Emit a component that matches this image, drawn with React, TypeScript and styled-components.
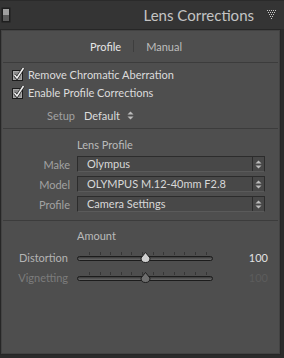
import React from "react";
import { styled, createGlobalStyle } from "styled-components";

const GlobalStyle = createGlobalStyle`
  html, body {
    margin: 0;
    padding: 0;
    background: #2b2b2b;
  }
  * {
    box-sizing: border-box;
  }
`;

type SliderProps = {
  label: string;
  value: number;
  position: number;
  disabled?: boolean;
};

const TICKS = Array.from({ length: 12 }, (_, i) => 12 + i * 10.6);

const SliderRow = ({ label, value, position, disabled }: SliderProps) => {
  return (
    <StyledSliderRow>
      <StyledSliderLabel $disabled={disabled}>{label}</StyledSliderLabel>
      <StyledSliderBody>
        <StyledTicks>
          {TICKS.map((x) => (
            <StyledTick key={x} style={{ left: x }} />
          ))}
        </StyledTicks>
        <StyledTrack />
        <StyledThumb style={{ left: position - 5 }}>
          <svg width="11" height="11" viewBox="0 0 11 11">
            <path
              d="M5.5 0.5 L10 6 Q10 10.5 5.5 10.5 Q1 10.5 1 6 Z"
              fill={disabled ? "#6e6e6e" : "#cfcfcf"}
              stroke="#1e1e1e"
              strokeWidth="1"
            />
          </svg>
        </StyledThumb>
      </StyledSliderBody>
      <StyledSliderValue $disabled={disabled}>{value}</StyledSliderValue>
    </StyledSliderRow>
  );
};

const Checkbox = () => (
  <svg width="14" height="14" viewBox="0 0 14 14">
    <rect x="1.5" y="3.5" width="10" height="10" fill="#8c8c8c" stroke="#1c1c1c" />
    <rect x="2.5" y="4.5" width="8" height="8" fill="none" stroke="#a8a8a8" />
    <path d="M3.5 8 L6 11 L12.5 1" fill="none" stroke="#1c1c1c" strokeWidth="3" />
    <path d="M3.5 8 L6 11 L12.5 1" fill="none" stroke="#f2f2f2" strokeWidth="1.6" />
  </svg>
);

const Spinner = () => (
  <svg width="7" height="9" viewBox="0 0 7 9">
    <path d="M3.5 0.5 L6.5 3.5 L0.5 3.5 Z" fill="currentColor" />
    <path d="M3.5 8.5 L6.5 5.5 L0.5 5.5 Z" fill="currentColor" />
  </svg>
);

const Select = ({ value }: { value: string }) => (
  <StyledSelect>
    <StyledSelectValue>{value}</StyledSelectValue>
    <StyledSelectArrows>
      <Spinner />
    </StyledSelectArrows>
  </StyledSelect>
);

const DOTS = [
  [0, 0], [2, 0], [4, 0], [6, 0], [8, 0],
  [1, 2], [3, 2], [5, 2], [7, 2],
  [2, 4], [4, 4], [6, 4],
  [3, 6], [5, 6],
  [4, 8],
];

const App = () => {
  return (
    <>
      <GlobalStyle />
      <StyledFrame>
        <StyledHeader>
          <svg width="11" height="17" viewBox="0 0 11 17">
            <rect x="0.5" y="0.5" width="9" height="15" fill="#1e1e1e" />
            <rect x="2" y="2" width="6" height="6" fill="#a0a0a0" />
            <rect x="2" y="8" width="6" height="6" fill="#5c5c5c" />
          </svg>
          <StyledTitle>Lens Corrections</StyledTitle>
          <svg width="10" height="10" viewBox="0 0 10 10">
            {DOTS.map(([x, y]) => (
              <rect key={`${x}-${y}`} x={x} y={y} width="1" height="1" fill="#c8c8c8" />
            ))}
          </svg>
        </StyledHeader>

        <StyledPanel>
          <StyledTabs>
            <StyledTab $active>Profile</StyledTab>
            <StyledTabDivider />
            <StyledTab>Manual</StyledTab>
          </StyledTabs>

          <StyledSection $top={2} $bottom={4}>
            <StyledCheckRow>
              <Checkbox />
              <span>Remove Chromatic Aberration</span>
            </StyledCheckRow>
            <StyledCheckRow>
              <Checkbox />
              <span>Enable Profile Corrections</span>
            </StyledCheckRow>
            <StyledSetupRow>
              <StyledFieldLabel $width={72}>Setup</StyledFieldLabel>
              <StyledSetupValue>
                Default
                <Spinner />
              </StyledSetupValue>
            </StyledSetupRow>
          </StyledSection>

          <StyledSection $top={8} $bottom={8}>
            <StyledGroupTitle>Lens Profile</StyledGroupTitle>
            <StyledFieldList>
              <StyledFieldRow>
                <StyledFieldLabel $width={67}>Make</StyledFieldLabel>
                <Select value="Olympus" />
              </StyledFieldRow>
              <StyledFieldRow>
                <StyledFieldLabel $width={67}>Model</StyledFieldLabel>
                <Select value="OLYMPUS M.12-40mm F2.8" />
              </StyledFieldRow>
              <StyledFieldRow>
                <StyledFieldLabel $width={67}>Profile</StyledFieldLabel>
                <Select value="Camera Settings" />
              </StyledFieldRow>
            </StyledFieldList>
          </StyledSection>

          <StyledSection $top={7} $bottom={0}>
            <StyledGroupTitle>Amount</StyledGroupTitle>
            <StyledSliders>
              <SliderRow label="Distortion" value={100} position={68} />
              <SliderRow label="Vignetting" value={100} position={68} disabled />
            </StyledSliders>
          </StyledSection>
        </StyledPanel>
      </StyledFrame>
    </>
  );
};

export default App;

const StyledFrame = styled("div")`
  width: 284px;
  height: 358px;
  display: flex;
  flex-direction: column;
  background: #2b2b2b;
  font-family: Lato, "Open Sans", sans-serif;
  font-size: 11px;
`;

const StyledHeader = styled("div")`
  height: 29px;
  display: flex;
  align-items: center;
  padding: 0 7px 0 1px;
  background: #343434;
  border-top: 1px solid #2a2a2a;
`;

const StyledTitle = styled("div")`
  flex: 1;
  text-align: right;
  padding-right: 13px;
  font-size: 15px;
  color: #c4c4c4;
`;

const StyledPanel = styled("div")`
  flex: 1;
  margin: 0 3px 3px 0;
  display: flex;
  flex-direction: column;
  background: #4e4e4e;
  border: 1px solid #262626;
  box-shadow: inset 0 0 0 1px #434343;
`;

const StyledTabs = styled("div")`
  height: 32px;
  display: flex;
  align-items: center;
  justify-content: center;
  gap: 12px;
  padding-right: 9px;
`;

const StyledTab = styled("span")<{ $active?: boolean }>`
  color: ${(p) => (p.$active ? "#e6e6e6" : "#bdbdbd")};
`;

const StyledTabDivider = styled("span")`
  width: 1px;
  height: 12px;
  background: #3e3e3e;
`;

const StyledSection = styled("div")<{ $top: number; $bottom: number }>`
  margin: 0 2px;
  padding: ${(p) => p.$top}px 0 ${(p) => p.$bottom}px;
  border-top: 1px solid #3c3c3c;
`;

const StyledCheckRow = styled("div")`
  height: 18px;
  display: flex;
  align-items: center;
  gap: 3px;
  padding-left: 8px;
  color: #dcdcdc;
`;

const StyledSetupRow = styled("div")`
  height: 18px;
  margin-top: 5px;
  display: flex;
  align-items: center;
  gap: 9px;
`;

const StyledFieldLabel = styled("span")<{ $width: number }>`
  width: ${(p) => p.$width}px;
  flex-shrink: 0;
  text-align: right;
  color: #a2a2a2;
`;

const StyledSetupValue = styled("span")`
  display: flex;
  align-items: center;
  gap: 7px;
  color: #dcdcdc;

  svg {
    color: #bcbcbc;
  }
`;

const StyledGroupTitle = styled("div")`
  height: 16px;
  line-height: 16px;
  padding-left: 74px;
  color: #bababa;
`;

const StyledFieldList = styled("div")`
  margin-top: 3px;
  display: flex;
  flex-direction: column;
  gap: 4px;
`;

const StyledFieldRow = styled("div")`
  display: flex;
  align-items: center;
  gap: 7px;
`;

const StyledSelect = styled("div")`
  width: 188px;
  height: 16px;
  display: flex;
  background: #484848;
  border: 1px solid #2c2c2c;
  border-bottom-color: #5a5a5a;
`;

const StyledSelectValue = styled("span")`
  flex: 1;
  padding-left: 9px;
  line-height: 14px;
  color: #d8d8d8;
  white-space: nowrap;
`;

const StyledSelectArrows = styled("span")`
  width: 12px;
  display: flex;
  align-items: center;
  justify-content: center;
  border-left: 1px solid #2c2c2c;
  color: #bcbcbc;
`;

const StyledSliders = styled("div")`
  margin-top: 3px;
  display: flex;
  flex-direction: column;
`;

const StyledSliderRow = styled("div")`
  height: 20px;
  display: flex;
  align-items: center;
`;

const StyledSliderLabel = styled("span")<{ $disabled?: boolean }>`
  width: 65px;
  flex-shrink: 0;
  text-align: right;
  color: ${(p) => (p.$disabled ? "#7c7c7c" : "#b4b4b4")};
`;

const StyledSliderBody = styled("div")`
  position: relative;
  width: 136px;
  height: 20px;
  margin-left: 9px;
  display: flex;
  align-items: center;
`;

const StyledTicks = styled("div")`
  position: absolute;
  left: 0;
  right: 0;
  top: 5px;
  height: 3px;
`;

const StyledTick = styled("span")`
  position: absolute;
  top: 0;
  width: 1px;
  height: 3px;
  background: #363636;
`;

const StyledTrack = styled("div")`
  width: 100%;
  height: 5px;
  margin-top: 2px;
  border: 1px solid #1c1c1c;
  border-radius: 3px;
  background: linear-gradient(#3a3a3a, #6a6a6a);
`;

const StyledThumb = styled("div")`
  position: absolute;
  top: 5px;
  width: 11px;
  height: 11px;
  display: flex;
`;

const StyledSliderValue = styled("span")<{ $disabled?: boolean }>`
  width: 55px;
  text-align: right;
  color: ${(p) => (p.$disabled ? "#5c5c5c" : "#e2e2e2")};
`;
